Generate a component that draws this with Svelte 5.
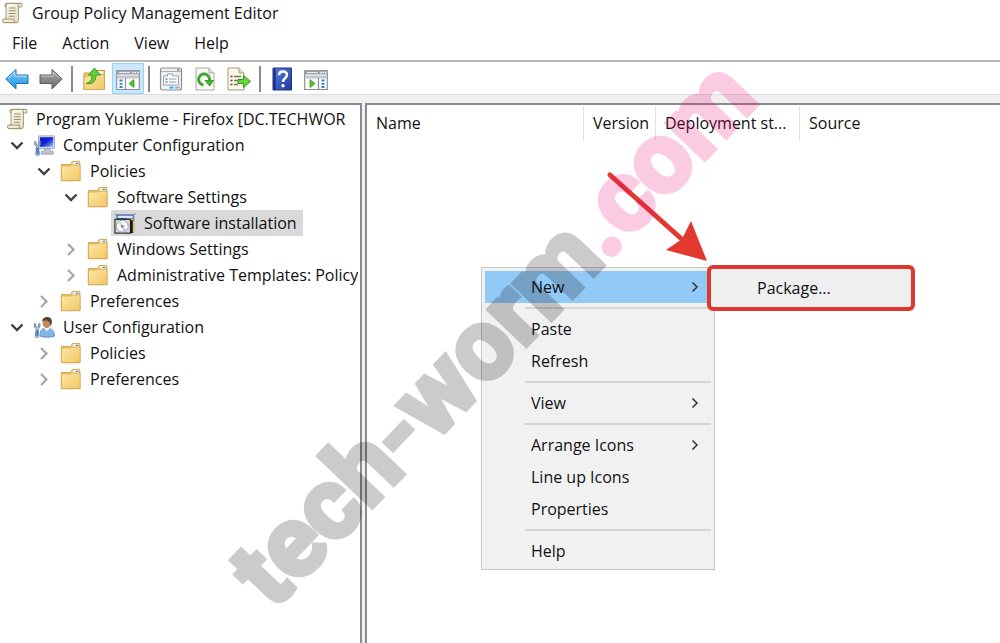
<script>
  const menus = ['File', 'Action', 'View', 'Help'];

  const tools = [
    { id: 'back', label: 'Back' },
    { id: 'forward', label: 'Forward' },
    null,
    { id: 'up', label: 'Up one level' },
    { id: 'tree', label: 'Show or hide console tree', active: true },
    null,
    { id: 'props', label: 'Properties' },
    { id: 'refresh', label: 'Refresh' },
    { id: 'export', label: 'Export list' },
    null,
    { id: 'help', label: 'Help' },
    { id: 'pane', label: 'Show or hide action pane' }
  ];

  const tree = [
    { level: 0, icon: 'scroll', text: 'Program Yukleme - Firefox [DC.TECHWOR', root: true },
    { level: 0, icon: 'computer', text: 'Computer Configuration', open: true },
    { level: 1, icon: 'folder', text: 'Policies', open: true },
    { level: 2, icon: 'folder', text: 'Software Settings', open: true },
    { level: 3, icon: 'package', text: 'Software installation', leaf: true, selected: true },
    { level: 2, icon: 'folder', text: 'Windows Settings' },
    { level: 2, icon: 'folder', text: 'Administrative Templates: Policy' },
    { level: 1, icon: 'folder', text: 'Preferences' },
    { level: 0, icon: 'user', text: 'User Configuration', open: true },
    { level: 1, icon: 'folder', text: 'Policies' },
    { level: 1, icon: 'folder', text: 'Preferences' }
  ];

  const context = [
    { text: 'New', sub: true, active: true },
    null,
    { text: 'Paste' },
    { text: 'Refresh' },
    null,
    { text: 'View', sub: true },
    null,
    { text: 'Arrange Icons', sub: true },
    { text: 'Line up Icons' },
    { text: 'Properties' },
    null,
    { text: 'Help' }
  ];
</script>

<svelte:head><title>Group Policy Management Editor</title></svelte:head>

<svg class="defs" width="0" height="0" aria-hidden="true">
  <defs>
    <linearGradient id="gBlue" x1="0" y1="0" x2="0" y2="1"><stop offset="0" stop-color="#7fd0fb" /><stop offset="1" stop-color="#1b8fe0" /></linearGradient>
    <linearGradient id="gGray" x1="0" y1="0" x2="0" y2="1"><stop offset="0" stop-color="#a8a8a8" /><stop offset="1" stop-color="#6c6c6c" /></linearGradient>
    <linearGradient id="gFolder" x1="0" y1="0" x2="1" y2="1"><stop offset="0" stop-color="#ffe8a2" /><stop offset="1" stop-color="#f0c667" /></linearGradient>
    <linearGradient id="gHelp" x1="0" y1="0" x2="1" y2="1"><stop offset="0" stop-color="#5a7fdc" /><stop offset="1" stop-color="#1c3a9e" /></linearGradient>
    <linearGradient id="gScreen" x1="0" y1="0" x2="1" y2="1"><stop offset="0" stop-color="#0a1ec4" /><stop offset=".5" stop-color="#1224d8" /><stop offset="1" stop-color="#a9c4fa" /></linearGradient>
    <linearGradient id="gPaper" x1="0" y1="0" x2="1" y2="1"><stop offset="0" stop-color="#fffdf2" /><stop offset="1" stop-color="#e9dcb2" /></linearGradient>
  </defs>
</svg>

{#snippet icon(name, size)}
  <svg width={size} height={size} viewBox="0 0 24 24" aria-hidden="true">
    {#if name === 'scroll'}
      <path d="M7 1.500h14c2.500 0 2.500 4 .5 4h-2.500v13c0 2.500-1 4-3 4H3.500C1 22.500 1 18.500 3.500 18.500H5.500V5c0-2 .3-3.500 1.500-3.500z" fill="url(#gPaper)" stroke="#a39a7e" stroke-width="1.100" />
      <path d="M6.500 1.500C4 1.500 3.500 5.500 5.500 5.500M19 5.500c-1-1-.6-3.500 .8-4M3.500 18.500h11c-.6 1.300 0 3.500 1.500 4" fill="none" stroke="#a39a7e" stroke-width="1.100" />
      <path d="M8.500 6.500h7.500M8.500 9.500h7.500M8.500 12.500h7.500M8.500 15.500h6.500" stroke="#8f8d88" stroke-width="1.200" />
    {:else if name === 'folder'}
      <path d="M1.500 5h10l2-3.500h8v21h-20z" fill="#f3d27c" stroke="#caa04a" />
      <path d="M14.500 2.500h6v3h-6z" fill="#fff" />
      <path d="M17 3h3v1.500h-3z" fill="#4b8fd8" />
      <path d="M1.500 6.500h10l2-1h8.500v17h-20.500z" fill="url(#gFolder)" stroke="#d2aa55" />
    {:else if name === 'computer'}
      <path d="M6 2h17.500v14H6z" fill="#d6dae2" stroke="#a3abbb" />
      <path d="M7.500 3.500h14.500V14h-14.500z" fill="url(#gScreen)" />
      <path d="M13 16h5l1 3h3v3H9v-3h3z" fill="#bcc4d2" stroke="#8d95a5" stroke-width=".8" />
      <path d="M2 8v4l2 2-1 8c0 2 4 2 4 0l-1-8 2-2V8L6.500 9v3h-3V9z" fill="#b9dcf2" stroke="#5f7f9f" />
      <path d="M3.800 15h2.400v7H3.800z" fill="#3b82bd" />
    {:else if name === 'user'}
      <path d="M8 22c-1-6 2-9 7-9 6 0 8.500 4 8.500 9-4 1.500-12 1.500-15.500 0z" fill="#83b5e6" stroke="#5f8fc4" />
      <path d="M12 13l3 4 4-4z" fill="#eaf4fc" />
      <ellipse cx="15" cy="7.500" rx="4.500" ry="5.500" fill="#c18c5a" />
      <path d="M10 6c0-6 10-6.500 10.500-1 .5 3-.5 5-1.500 6 0-4-2-5-4-6-2-.5-4 0-5 1z" fill="#5a4334" />
      <path d="M1.500 8v4l2 2-1 8c0 2 4 2 4 0l-1-8 2-2V8L6 9v3H3V9z" fill="#cde6f7" stroke="#5f7f9f" />
      <path d="M3.500 15h2v7h-2z" fill="#3b82bd" />
    {:else if name === 'package'}
      <path d="M3 4L1 1.500M21 4l2.500-2.500" stroke="#4f66a5" />
      <path d="M3 3h18.500v19H3z" fill="#2a55b8" stroke="#6c7cae" />
      <path d="M4 4h16.500v2.500H4z" fill="#dfe6f4" />
      <path d="M14 7h6.500v3H14z" fill="#efd264" />
      <path d="M1 8h17v15H1z" fill="#d4d8dc" stroke="#333" stroke-width="1.300" />
      <circle cx="9" cy="15.500" r="6.500" fill="#f6f8fa" stroke="#9aa0a6" />
      <path d="M9 15.500L4 11.500a6 6 0 0 1 4-2.300z" fill="#c6e7c1" />
      <path d="M9 15.500l5 4a6 6 0 0 1-4 2.200z" fill="#c4c5ec" />
      <circle cx="9" cy="15.500" r="1.600" fill="#888" />
      <path d="M18 9h2.500v14H18z" fill="#111" />
      <path d="M20.500 10h1.500v12h-1.500z" fill="#e5c757" />
    {:else if name === 'back'}
      <path d="M.8 12L11 2.500V8h12v8.500H11V22z" fill="url(#gBlue)" stroke="#2a6fae" stroke-linejoin="round" />
      <path d="M3 11.500L9.800 5v4.200h12" fill="none" stroke="#b8e6ff" />
    {:else if name === 'forward'}
      <path d="M23.200 12L13 2.500V8H1v8.500h12V22z" fill="url(#gGray)" stroke="#5c5c5c" stroke-linejoin="round" />
      <path d="M2 9.200h12.200V5.200l6 5.800" fill="none" stroke="#c9c9c9" />
    {:else if name === 'up'}
      <path d="M2 6h9l2-2.500h9.500V22.500H2z" fill="#f3d27c" stroke="#c69a42" />
      <path d="M15 4.500h6v2.500h-6z" fill="#fff" />
      <path d="M2 9h9l2-1.500h9.500v15H2z" fill="url(#gFolder)" stroke="#d2aa55" />
      <path d="M4 16.500c4.500-1 6-4 6-8.500H6.500L12.500 1l6 7H14c0 6-3 10-10 8.500z" fill="#5fd03c" stroke="#3a9a27" />
    {:else if name === 'tree' || name === 'pane'}
      <path d="M.7 3.500h22.600v19H.7z" fill="#fff" stroke="#8b9098" stroke-width="1.200" />
      <path d="M.7 3.500h22.600v4H.7z" fill="#9aa0a9" />
      <path d="M3 5.500h11" stroke="#e4e7eb" stroke-width="1.200" />
      <path d="M16 5.500h1.500M18.500 5.500H20M21 5.500h1.500" stroke="#fff" stroke-width="1.500" />
      <path d="M1 8.500h22v3H1z" fill="#c3c7cd" />
      {#if name === 'tree'}
        <path d="M9.500 11v12" stroke="#8b9098" stroke-width="1.200" />
        <path d="M3.500 13.500h3M3.500 16.800h3M3.500 20h3" stroke="#2f7fd6" stroke-width="1.800" />
        <path d="M18 12.500v8L13 16.500z" fill="#4fc52a" stroke="#35a022" stroke-width=".8" />
      {:else}
        <path d="M14.500 11v12" stroke="#8b9098" stroke-width="1.200" />
        <path d="M17.500 13.500h3M17.500 16.800h3M17.500 20h3" stroke="#2f7fd6" stroke-width="1.800" />
        <path d="M6 12.500v8l5-4z" fill="#4fc52a" stroke="#35a022" stroke-width=".8" />
      {/if}
    {:else if name === 'props'}
      <rect x="1.500" y="1" width="21" height="22" rx="2" fill="#eef0f2" stroke="#8b9098" stroke-width="1.200" />
      <path d="M2 4.500h20" stroke="#a9afb7" />
      <path d="M18 2.800h2.500" stroke="#666" stroke-width="1.200" />
      <path d="M4.500 9h4V7h5v2h6v9h-15z" fill="#fff" stroke="#98a3b3" />
      <path d="M6.500 12h2M6.500 15h2" stroke="#348fd6" stroke-width="1.600" />
      <path d="M10 12h7.500M10 15h7.500" stroke="#929aa5" stroke-width="1.200" />
      <path d="M10.500 19.500h4v2h-4z" fill="#2bb4ee" />
      <path d="M16 20.500h4.500" stroke="#a5abb3" stroke-width="2" />
    {:else if name === 'refresh'}
      <path d="M3 1h13l5 5v17H3z" fill="#fbfbf6" stroke="#aaa79c" />
      <path d="M16 1v5h5" fill="#e6e4da" stroke="#aaa79c" />
      <path d="M10.500 18a5.500 5.500 0 1 1 6-4.500" fill="none" stroke="#3fa531" stroke-width="3" />
      <path d="M12 13.500h8.500L16.500 19z" fill="#45b733" stroke="#2b8a20" stroke-width=".8" />
    {:else if name === 'export'}
      <path d="M1 1h11l5 5v17H1z" fill="#fbf8e4" stroke="#a39d83" />
      <path d="M12 1v5h5" fill="#e6e0c4" stroke="#a39d83" />
      <path d="M3.500 9.500h2M3.500 13.500h2M3.500 17.500h2" stroke="#444" stroke-width="1.500" />
      <path d="M7 9.500h7M7 13.500h4M7 17.500h4" stroke="#77756c" stroke-width="1.300" />
      <path d="M11 12.500h5.500V8.500l7 6-7 6v-4H11z" fill="#67d53d" stroke="#2f961f" />
    {:else if name === 'help'}
      <path d="M3 1h18.500v22H3z" fill="url(#gHelp)" stroke="#20357c" />
      <path d="M4.500 1.500v21" stroke="#16297a" stroke-width="2" />
      <path d="M9 8.200c0-5 8-5 8-.4 0 3.200-4 3.700-4 7.200" fill="none" stroke="#fff" stroke-width="2.500" />
      <circle cx="13" cy="18.800" r="1.700" fill="#fff" />
    {/if}
  </svg>
{/snippet}

<div class="window">
  <header class="titlebar">
    {@render icon('scroll', 22)}
    <h1>Group Policy Management Editor</h1>
  </header>

  <nav class="menubar">
    {#each menus as m}<button type="button">{m}</button>{/each}
  </nav>

  <div class="toolbar" role="toolbar" aria-label="Console">
    {#each tools as t}
      {#if t}
        <button type="button" class:active={t.active} aria-label={t.label}>{@render icon(t.id, 24)}</button>
      {:else}
        <span class="rule"></span>
      {/if}
    {/each}
  </div>

  <main class="panes">
    <div class="tree" role="tree" aria-label="Console tree">
      {#each tree as n}
        <div class="row" role="treeitem" aria-selected={!!n.selected} aria-level={n.level + 1} style:--level={n.level}>
          {#if !n.root}
            <span class="twist">
              {#if !n.leaf}
                <svg width="14" height="14" viewBox="0 0 14 14" aria-hidden="true">
                  {#if n.open}
                    <path d="M1.500 4.500L7 10l5.500-5.500" fill="none" stroke="#404040" stroke-width="2.400" />
                  {:else}
                    <path d="M4 2L9.500 7.500 4 13" fill="none" stroke="#a6a6a6" stroke-width="2.200" />
                  {/if}
                </svg>
              {/if}
            </span>
          {/if}
          <button type="button" class="node" class:selected={n.selected}>{@render icon(n.icon, 22)}<span>{n.text}</span></button>
        </div>
      {/each}
    </div>

    <section class="list">
      <table>
        <thead>
          <tr><th class="name">Name</th><th class="version">Version</th><th class="state">Deployment st...</th><th>Source</th></tr>
        </thead>
      </table>

      <div class="context" role="menu">
        {#each context as c}
          {#if c}
            <button type="button" role="menuitem" class:active={c.active}>
              <span>{c.text}</span>
              {#if c.sub}
                <svg width="8" height="12" viewBox="0 0 8 12" aria-hidden="true"><path d="M1.500 1.500L6 6l-4.500 4.500" fill="none" stroke="#333" stroke-width="1.500" /></svg>
              {/if}
            </button>
          {:else}
            <hr />
          {/if}
        {/each}
      </div>

      <div class="submenu" role="menu"><button type="button" role="menuitem">Package...</button></div>

      <svg class="arrow" width="110" height="100" viewBox="600 165 110 100" aria-hidden="true">
        <path d="M610 175l75 67" stroke="#e1382f" stroke-width="5" stroke-linecap="round" />
        <path d="M707 261l-16-40-9 18-16 11z" fill="#e1382f" />
      </svg>
    </section>
  </main>

  <svg class="watermark" width="1000" height="643" viewBox="0 0 1000 643" aria-hidden="true">
    <text transform="translate(273 611) rotate(-46.300)">tech-worm<tspan>.com</tspan></text>
  </svg>
</div>

<style>
  :global(body) { margin: 0; background: #fff; }
  .defs { position: absolute; }
  .window {
    position: relative;
    display: flex;
    flex-direction: column;
    min-height: 100vh;
    overflow: hidden;
    background: #fff;
    color: #111;
    font: 16px/26px "Open Sans", "Noto Sans", sans-serif;
  }
  button { font: inherit; color: inherit; background: none; border: 0; padding: 0; margin: 0; text-align: left; white-space: nowrap; }
  svg { flex: none; display: block; }

  .titlebar { display: flex; align-items: center; gap: 9px; height: 26px; padding-left: 1px; }
  h1 { margin: 0; font: inherit; }

  .menubar { display: flex; gap: 25px; height: 34px; padding-left: 12px; align-items: center; border-bottom: 2px solid #bababa; }

  .toolbar { display: flex; align-items: center; gap: 2px; height: 31px; padding: 1px 0 0 1px; border-bottom: 1px solid #dcdcdc; }
  .toolbar button { box-sizing: border-box; width: 32px; height: 31px; display: grid; place-items: center; border: 1px solid transparent; }
  .toolbar button.active { background: #cce8ff; border-color: #99d1ff; }
  .rule { width: 2px; height: 26px; margin: 0 3px 0 2px; background: #8a8a8a; }

  .panes { flex: 1; display: flex; gap: 3px; padding-top: 8px; background: #f0f0f0; }
  .tree { box-sizing: border-box; width: 362px; flex: none; border: solid #878b93; border-width: 2px 2px 0 0; background: #fff; overflow: hidden; padding-top: 1px; }
  .row { display: flex; height: 26px; margin-right: 2px; padding-left: calc(3px + var(--level) * 27px); overflow: hidden; }
  .twist { width: 27px; flex: none; display: grid; place-items: center; }
  .node { display: flex; align-items: center; gap: 8px; padding: 0 6px 0 3px; }
  .node.selected { background: #d9d9d9; }

  .list { position: relative; flex: 1; border: solid #878b93; border-width: 2px 0 0 2px; background: #fff; }
  table { width: 100%; table-layout: fixed; border-collapse: separate; border-spacing: 0; margin-top: 1px; }
  th { box-sizing: border-box; height: 34px; padding: 0 0 0 9px; text-align: left; font-weight: 400; white-space: nowrap; border-right: 1px solid #e2e2e2; }
  th:last-child { border-right: 0; }
  .name { width: 217px; }
  .version { width: 72px; }
  .state { width: 144px; }

  .context { position: absolute; left: 114px; top: 162px; box-sizing: border-box; width: 234px; padding: 3px 3px 2px; background: #f1f1f1; border: 1px solid #c6c6c6; }
  .context button { display: flex; align-items: center; justify-content: space-between; box-sizing: border-box; width: 100%; height: 32px; padding: 0 12px 0 46px; }
  .context button.active { background: #91c9f7; }
  hr { height: 2px; margin: 4px 0 4px 40px; border: 0; background: #d5d5d5; }

  .submenu { position: absolute; left: 340px; top: 160px; box-sizing: border-box; width: 208px; border: 4px solid #dc382f; border-radius: 6px; background: #efefef; }
  .submenu button { width: 100%; height: 38px; padding-left: 46px; }

  .arrow { position: absolute; left: 233px; top: 60px; }
  .watermark { position: absolute; left: 0; top: 0; pointer-events: none; }
  .watermark text { font: 700 99px Roboto, sans-serif; opacity: 0.2; fill: #000; stroke: #000; stroke-width: 5px; }
  .watermark tspan { fill: #ec006e; stroke: #ec006e; }
</style>
